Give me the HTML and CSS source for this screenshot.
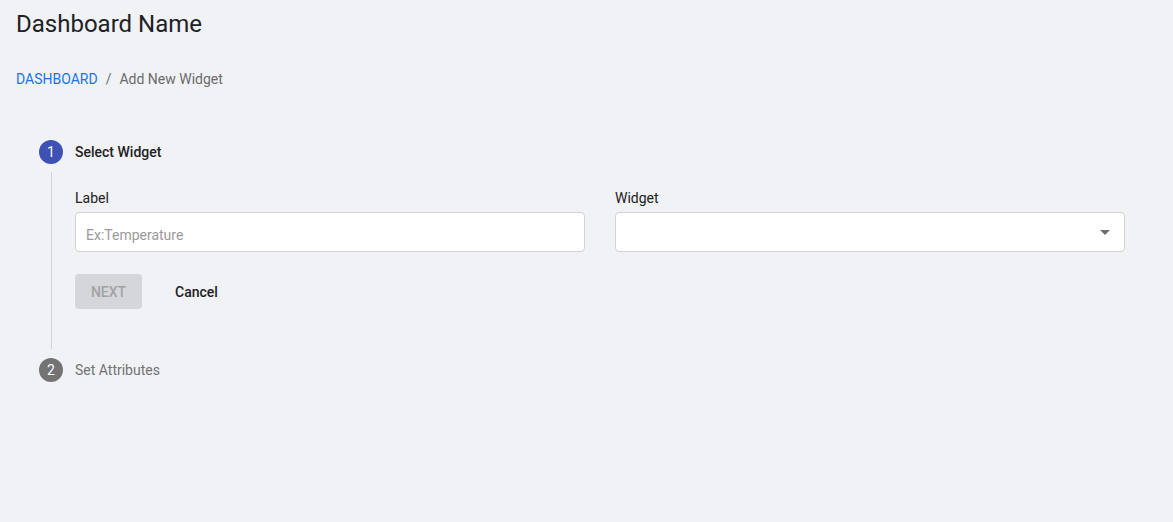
FILE: index.html
```html
<!DOCTYPE html>
<html lang="en">
<head>
<meta charset="utf-8">
<title>Dashboard Name</title>
<link rel="stylesheet" href="styles.css">
</head>
<body>
<div class="page">
  <h1 class="title">Dashboard Name</h1>
  <nav class="breadcrumb">
    <a class="crumb-link" href="#">DASHBOARD</a>
    <span class="crumb-sep">/</span>
    <span class="crumb-current">Add New Widget</span>
  </nav>

  <div class="stepper">
    <div class="step">
      <div class="step-header">
        <span class="step-num active">1</span>
        <span class="step-title active">Select Widget</span>
      </div>
      <div class="step-body">
        <div class="fields">
          <div class="field">
            <label class="field-label">Label</label>
            <input class="text-input" type="text" placeholder="Ex:Temperature">
          </div>
          <div class="field">
            <label class="field-label">Widget</label>
            <div class="select-box">
              <span class="select-arrow"></span>
            </div>
          </div>
        </div>
        <div class="actions">
          <button class="btn btn-next" disabled>NEXT</button>
          <button class="btn btn-cancel">Cancel</button>
        </div>
      </div>
    </div>
    <div class="step">
      <div class="step-header">
        <span class="step-num">2</span>
        <span class="step-title">Set Attributes</span>
      </div>
    </div>
  </div>
</div>
</body>
</html>
```

FILE: styles.css
```css
* { box-sizing: border-box; }

html, body {
  margin: 0;
  background: #f1f2f6;
  font-family: Roboto, "Liberation Sans", Arial, sans-serif;
  color: #212121;
}

body { min-height: 522px; }

.page {
  padding: 8px 16px 16px;
}

.title {
  margin: 0;
  font-size: 24px;
  line-height: 32px;
  font-weight: 400;
  color: #202124;
}

.breadcrumb {
  margin-top: 29px;
  font-size: 14px;
  line-height: 20px;
  display: flex;
  align-items: center;
}

.crumb-link {
  color: #1a73e8;
  text-decoration: none;
}

.crumb-sep {
  color: #6b6b6b;
  margin: 0 8px;
}

.crumb-current {
  color: #6b6b6b;
}

.stepper {
  margin-top: 51px;
  margin-left: 23px;
  padding-right: 32px;
}

.step-header {
  display: flex;
  align-items: center;
  gap: 12px;
  height: 24px;
}

.step-num {
  width: 24px;
  height: 24px;
  border-radius: 50%;
  background: #737373;
  color: #fff;
  font-size: 14px;
  display: flex;
  align-items: center;
  justify-content: center;
  flex-shrink: 0;
}

.step-num.active {
  background: #3f51b5;
}

.step-title {
  font-size: 14px;
  color: #737373;
}

.step-title.active {
  color: #212121;
  font-weight: 500;
}

.step-body {
  margin: 8px 0 9px 12px;
  border-left: 1px solid #d3d4d8;
  padding: 16px 0 40px 23px;
}

.fields {
  display: grid;
  grid-template-columns: 1fr 1fr;
  gap: 30px;
}

.field {
  display: flex;
  flex-direction: column;
}

.field-label {
  font-size: 14px;
  line-height: 20px;
  color: #212121;
  margin-bottom: 4px;
}

.text-input {
  height: 40px;
  border: 1px solid #d2d2d2;
  border-radius: 4px;
  background: #fff;
  padding: 6px 10px 0;
  font-family: inherit;
  font-size: 14px;
  color: #212121;
  outline: none;
}

.text-input::placeholder {
  color: #9a9a9a;
}

.select-box {
  height: 40px;
  border: 1px solid #d2d2d2;
  border-radius: 4px;
  background: #fff;
  display: flex;
  align-items: center;
  justify-content: flex-end;
  padding-right: 14px;
}

.select-arrow {
  width: 0;
  height: 0;
  border-left: 5px solid transparent;
  border-right: 5px solid transparent;
  border-top: 5px solid #6e6e6e;
}

.actions {
  margin-top: 22px;
  display: flex;
  align-items: center;
  gap: 17px;
}

.btn {
  height: 35px;
  padding: 0 16px;
  border: none;
  border-radius: 4px;
  font-family: inherit;
  font-size: 14px;
  font-weight: 500;
  background: transparent;
  cursor: pointer;
}

.btn-next {
  background: #d5d6da;
  color: #a2a3a6;
  width: 67px;
  padding: 0;
}

.btn-cancel {
  color: #202124;
}
```
